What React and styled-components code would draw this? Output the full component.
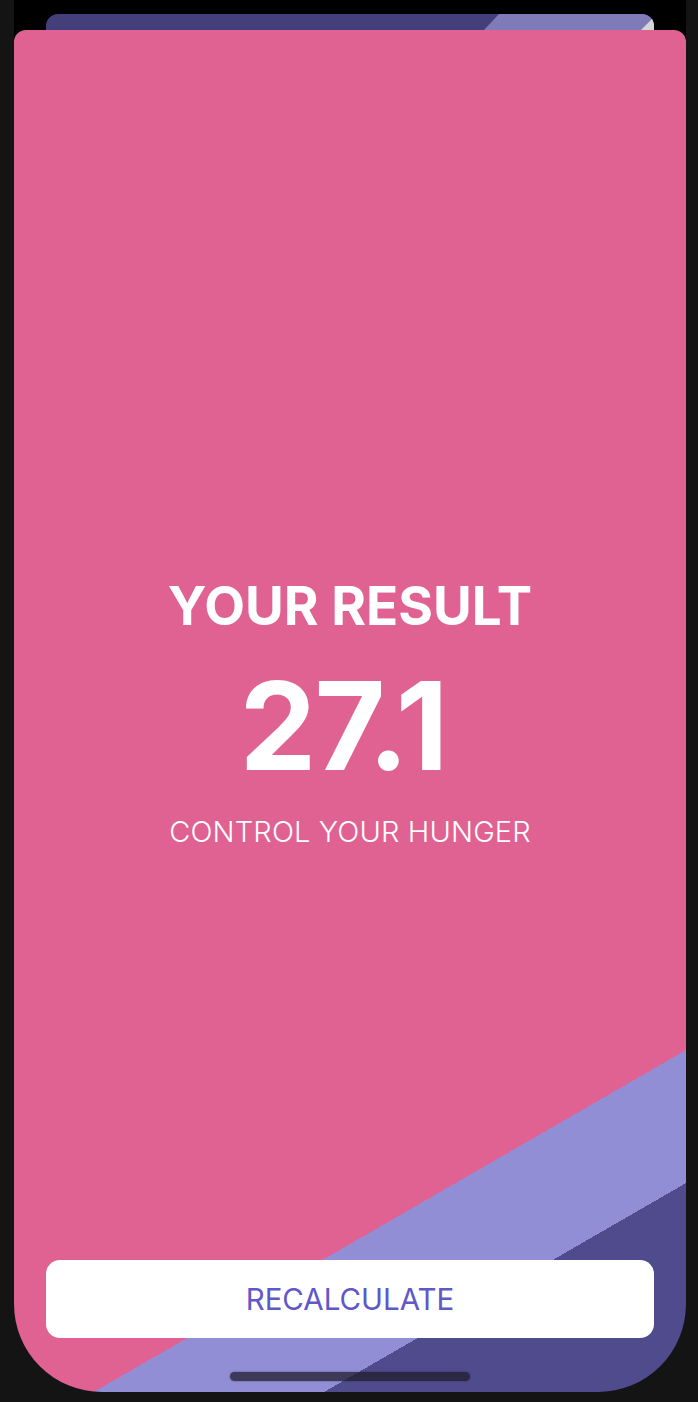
import React from "react";
import styled, { createGlobalStyle } from "styled-components";

const GlobalStyle = createGlobalStyle`
  html, body {
    margin: 0;
    padding: 0;
    background: #141414;
    font-family: Inter, "Noto Sans", "Liberation Sans", sans-serif;
  }
`;

const Screen = styled.div`
  position: relative;
  width: 672px;
  height: 1392px;
  margin: 0 auto 0 14px;
  background: #000;
  border-radius: 0 0 88px 88px;
  overflow: hidden;
  display: flex;
  flex-direction: column;
  align-items: center;
  padding-top: 14px;
  box-sizing: border-box;
`;

const BackSheet = styled.div`
  width: 608px;
  height: 16px;
  flex-shrink: 0;
  border-radius: 12px 12px 0 0;
  overflow: hidden;
  background: #443f7a;

  svg {
    display: block;
  }
`;

const Sheet = styled.div`
  position: relative;
  align-self: stretch;
  flex: 1;
  display: flex;
  flex-direction: column;
  padding: 0 32px 54px;
  border-radius: 12px 12px 0 0;
  background: linear-gradient(
    150deg,
    #e06292 80.46%,
    #918ed6 80.46%,
    #918ed6 88.06%,
    #504b8c 88.06%
  );
`;

const Result = styled.main`
  flex: 1;
  display: flex;
  flex-direction: column;
  align-items: center;
  justify-content: center;
  padding-top: 134px;
  color: #fff;
  text-align: center;
`;

const Title = styled.h1`
  margin: 0;
  font-size: 53px;
  line-height: 60px;
  font-weight: 700;
`;

const Score = styled.div`
  margin-top: 30px;
  padding-right: 14px;
  font-size: 122px;
  line-height: 120px;
  font-weight: 700;
  letter-spacing: -2px;
`;

const Advice = styled.p`
  margin: 29px 0 0;
  font-size: 29px;
  line-height: 34px;
  font-weight: 300;
  letter-spacing: 0.15px;
`;

const Button = styled.button`
  height: 78px;
  border: none;
  border-radius: 14px;
  background: #fff;
  color: #5f58c9;
  font-family: inherit;
  font-size: 29.5px;
  font-weight: 400;
  cursor: pointer;
`;

const HomeBar = styled.div`
  position: absolute;
  left: 50%;
  bottom: 11px;
  width: 240px;
  height: 9px;
  margin-left: -120px;
  border-radius: 5px;
  background: rgba(28, 26, 40, 0.72);
  box-shadow: 0 0 2px rgba(28, 26, 40, 0.5);
`;

const App = () => {
  return (
    <>
      <GlobalStyle />
      <Screen>
        <BackSheet>
          <svg width="608" height="16" viewBox="0 0 608 16">
            <polygon points="453,0 608,0 608,16 438,16" fill="#7f7bb8" />
            <polygon points="608,3 608,16 595,16" fill="#d6d6d6" />
          </svg>
        </BackSheet>
        <Sheet>
          <Result>
            <Title>YOUR RESULT</Title>
            <Score>27.1</Score>
            <Advice>CONTROL YOUR HUNGER</Advice>
          </Result>
          <Button type="button">RECALCULATE</Button>
          <HomeBar />
        </Sheet>
      </Screen>
    </>
  );
};

export default App;
